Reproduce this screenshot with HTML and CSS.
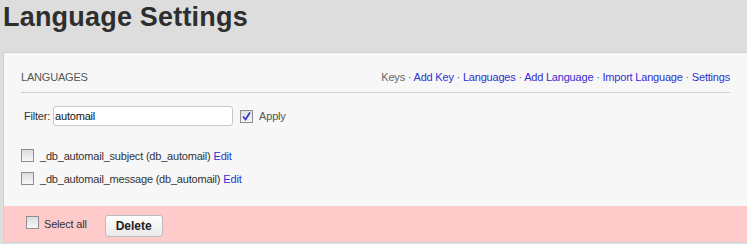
FILE: index.html
```html
<!DOCTYPE html>
<html lang="en">
<head>
    <meta charset="UTF-8">
    <title>Language Settings</title>
    <link rel="stylesheet" href="styles.css">
</head>
<body>
<h1 class="page-title">Language Settings</h1>
<div class="panel">
    <div class="panel-body">
        <div class="panel-head">
            <span class="panel-caption">LANGUAGES</span>
            <div class="panel-links">
                Keys &middot; <a href="#">Add Key</a> &middot; <a href="#">Languages</a> &middot;
                <a href="#">Add Language</a> &middot; <a href="#">Import Language</a> &middot;
                <a href="#">Settings</a>
            </div>
        </div>
        <form class="filter-row">
            <label class="filter-label" for="filter">Filter:</label>
            <input class="filter-input" id="filter" type="text" value="automail">
            <span class="box box-checked">
                <svg width="11" height="11" viewBox="0 0 11 11">
                    <path d="M2 5.5 L4.5 8.5 L9 1.5" fill="none" stroke="#3a3ad0" stroke-width="1.8"/>
                </svg>
            </span>
            <span class="apply-label">Apply</span>
        </form>
        <div class="key-list">
            <div class="key-row">
                <span class="box"></span>
                <span class="key-name">_db_automail_subject (db_automail)</span>
                <a href="#">Edit</a>
            </div>
            <div class="key-row">
                <span class="box"></span>
                <span class="key-name">_db_automail_message (db_automail)</span>
                <a href="#">Edit</a>
            </div>
        </div>
    </div>
    <div class="panel-foot">
        <span class="box"></span>
        <span class="select-all">Select all</span>
        <button class="delete-btn" type="button">Delete</button>
    </div>
</div>
</body>
</html>
```

FILE: styles.css
```css
body {
    margin: 0;
    font-family: "Liberation Sans", Arial, sans-serif;
    font-size: 11px;
    letter-spacing: -0.2px;
    color: #333;
    background-color: #dddddd;
    overflow: hidden;
}

a {
    color: #3030d0;
    text-decoration: none;
}

.page-title {
    margin: 0 0 19px 0;
    padding: 1px 0 0 3px;
    font-size: 27px;
    line-height: 32px;
    font-weight: bold;
    letter-spacing: 0.2px;
    color: #2e2e2e;
}

.panel {
    margin-left: 3px;
    background-color: #f7f7f7;
    border: 1px solid #d2d2d2;
    border-right: none;
}

.panel-body {
    padding: 17px 17px 16px 17px;
}

.panel-head {
    display: flex;
    justify-content: space-between;
    line-height: 14px;
    padding-bottom: 8px;
    border-bottom: 1px solid #cfcfcf;
}

.panel-caption {
    color: #555;
}

.panel-links {
    color: #666;
}

.filter-row {
    display: flex;
    align-items: center;
    margin: 13px 0 0 0;
    padding-left: 3px;
    height: 20px;
}

.filter-label {
    margin-right: 3px;
}

.filter-input {
    box-sizing: border-box;
    width: 180px;
    height: 20px;
    margin: 0 7px 0 0;
    padding: 0 1px;
    border: 1px solid #c8c8c8;
    border-radius: 3px;
    font-family: "Liberation Sans", Arial, sans-serif;
    font-size: 11px;
    letter-spacing: -0.2px;
    color: #111;
    background: #fff;
}

.box {
    box-sizing: border-box;
    display: inline-flex;
    align-items: center;
    justify-content: center;
    width: 13px;
    height: 13px;
    border: 1px solid #8e8e8e;
    background: linear-gradient(#dcdcdc, #f8f8f8);
    flex: none;
}

.box-checked {
    background: linear-gradient(#e2e2e2, #f6f6f6);
}

.apply-label {
    margin-left: 6px;
    color: #555;
}

.key-list {
    margin-top: 18px;
}

.key-row {
    display: flex;
    align-items: center;
    height: 23px;
}

.key-row .box {
    margin-right: 6px;
}

.key-name {
    margin-right: 3px;
}

.panel-foot {
    display: flex;
    align-items: center;
    height: 36px;
    padding-left: 22px;
    background-color: #ffcaca;
}

.panel-foot .box {
    margin: 0 5px 4px 0;
}

.select-all {
    margin-right: 18px;
}

.delete-btn {
    width: 58px;
    height: 22px;
    padding: 0;
    margin-top: 4px;
    border: 1px solid #bcbcbc;
    border-radius: 3px;
    background: linear-gradient(#ffffff, #e9e9e9);
    font-family: "Liberation Sans", Arial, sans-serif;
    font-size: 12px;
    font-weight: bold;
    color: #222;
    cursor: pointer;
}
```
